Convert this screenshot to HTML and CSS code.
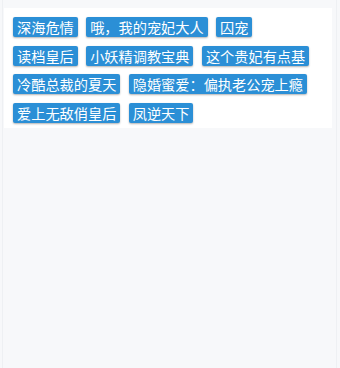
FILE: index.html
```html
<!DOCTYPE html>
<html lang="zh">
<head>
<meta charset="utf-8">
<link rel="stylesheet" href="styles.css">
</head>
<body>
<div class="page">
  <div class="card">
    <div class="tags">
      <span class="tag">深海危情</span>
      <span class="tag">哦，我的宠妃大人</span>
      <span class="tag">囚宠</span>
      <span class="tag">读档皇后</span>
      <span class="tag">小妖精调教宝典</span>
      <span class="tag">这个贵妃有点基</span>
      <span class="tag">冷酷总裁的夏天</span>
      <span class="tag">隐婚蜜爱：偏执老公宠上瘾</span>
      <span class="tag">爱上无敌俏皇后</span>
      <span class="tag">凤逆天下</span>
    </div>
  </div>
</div>
</body>
</html>
```
FILE: styles.css
```css
html, body {
  margin: 0;
  padding: 0;
  background: #f7f8fa;
}
body {
  font-family: "Noto Sans CJK SC", "Noto Sans", sans-serif;
}
.page {
  height: 368px;
  box-sizing: border-box;
  margin: 0 3px 0 2px;
  border-left: 1px solid #eef0f3;
  border-right: 1px solid #eef0f3;
  padding: 8px 4px 0 1px;
}
.card {
  background: #ffffff;
  padding: 9px 8px 5px 9px;
}
.tags {
  display: flex;
  flex-wrap: wrap;
  column-gap: 8.4px;
  row-gap: 8.7px;
  width: 300px;
}
.tag {
  display: inline-block;
  height: 20px;
  line-height: 20px;
  padding: 0 4px;
  font-size: 14.2px;
  color: #ffffff;
  background: #2b8fd6;
  border-radius: 2px;
  box-shadow: 0 1px 2px rgba(0, 0, 0, 0.3);
  white-space: nowrap;
}
```
